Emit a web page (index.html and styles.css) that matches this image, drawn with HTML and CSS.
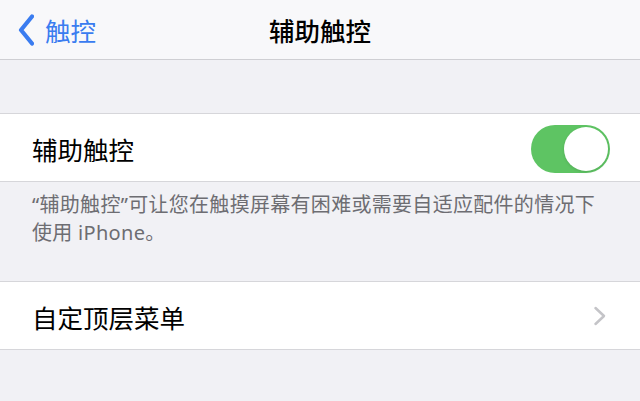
FILE: index.html
```html
<!DOCTYPE html>
<html lang="zh-CN">
<head>
    <meta charset="UTF-8">
    <meta name="viewport" content="width=device-width, initial-scale=1.0">
    <title>辅助触控</title>
    <link rel="stylesheet" href="styles.css">
</head>
<body>
    <header class="nav-bar">
        <a class="nav-back" href="#">
            <svg class="back-icon" width="16" height="32" viewBox="0 0 16 32">
                <polyline points="14,2.5 3,16 14,29.5" />
            </svg>
            <span>触控</span>
        </a>
        <h1 class="nav-title">辅助触控</h1>
        <div class="nav-side"></div>
    </header>

    <div class="spacer"></div>

    <div class="group">
        <div class="row">
            <span class="row-label">辅助触控</span>
            <button class="switch is-on" aria-label="辅助触控"><span class="switch-knob"></span></button>
        </div>
    </div>
    <p class="group-note">“辅助触控”可让您在触摸屏幕有困难或需要自适应配件的情况下使用 iPhone。</p>

    <div class="group">
        <a class="row" href="#">
            <span class="row-label">自定顶层菜单</span>
            <svg class="chevron" width="14" height="20" viewBox="0 0 14 20">
                <polyline points="2.5,2 11,10 2.5,18" />
            </svg>
        </a>
    </div>
</body>
</html>
```

FILE: styles.css
```css
body {
    margin: 0;
    background-color: #f1f1f5;
    font-family: "Noto Sans CJK SC", "Noto Sans", sans-serif;
    color: #000;
    overflow: hidden;
}

/* top navigation */
.nav-bar {
    display: grid;
    grid-template-columns: 1fr auto 1fr;
    align-items: center;
    height: 59px;
    background-color: #f8f8fa;
    border-bottom: 1px solid #cfcfd3;
}
.nav-back {
    display: flex;
    align-items: center;
    gap: 11px;
    padding-left: 18px;
    color: #3a7cf0;
    text-decoration: none;
    font-size: 25.5px;
    line-height: 1;
}
.back-icon polyline {
    fill: none;
    stroke: #3a7cf0;
    stroke-width: 4.2;
    stroke-linecap: round;
    stroke-linejoin: round;
}
.nav-title {
    margin: 0;
    font-size: 25.5px;
    font-weight: 500;
    line-height: 1;
}

.spacer {
    height: 53px;
}

/* grouped list */
.group {
    background-color: #fff;
    border-top: 1px solid #d6d6da;
    border-bottom: 1px solid #d6d6da;
}
.row {
    display: flex;
    align-items: center;
    justify-content: space-between;
    height: 67px;
    padding: 0 31px 0 32px;
    color: #000;
    text-decoration: none;
}
.row-label {
    font-size: 25.5px;
    line-height: 1;
    padding-top: 3px;
}
.group-note {
    margin: 0;
    height: 99px;
    box-sizing: border-box;
    padding: 9px 36px 0 32px;
    font-family: "Noto Sans", "Noto Sans CJK SC", sans-serif;
    font-size: 20px;
    line-height: 28px;
    letter-spacing: 0.3px;
    color: #6d6d72;
}

/* toggle switch */
.switch {
    display: flex;
    justify-content: flex-end;
    align-items: center;
    width: 79px;
    height: 48px;
    margin-top: 3px;
    margin-right: -1px;
    padding: 2px;
    border: none;
    border-radius: 24px;
    background-color: #5ec463;
    box-sizing: border-box;
}
.switch-knob {
    width: 44px;
    height: 44px;
    border-radius: 50%;
    background-color: #fff;
    box-shadow: 0 1px 3px rgba(0, 0, 0, 0.12);
}

.chevron {
    margin-right: 2px;
}
.chevron polyline {
    fill: none;
    stroke: #c4c4c8;
    stroke-width: 2.5;
    stroke-linecap: round;
    stroke-linejoin: round;
}
```
